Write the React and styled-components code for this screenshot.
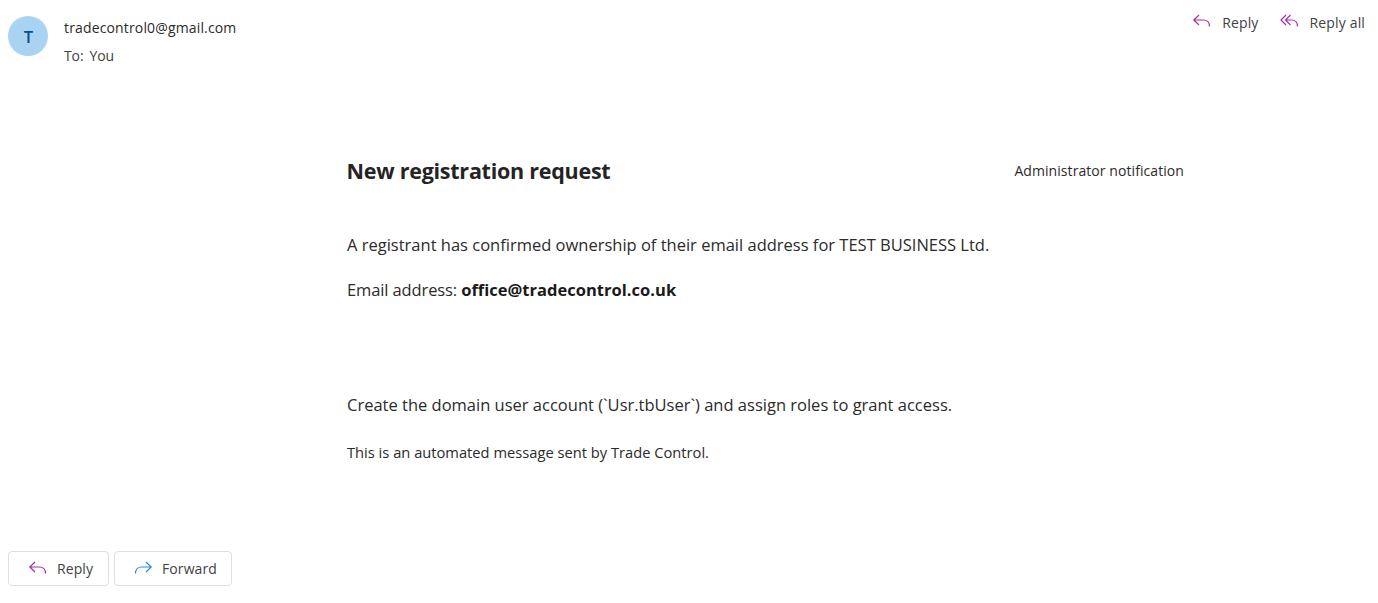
import React from 'react';
import styled, { createGlobalStyle } from 'styled-components';

const GlobalStyle = createGlobalStyle`
  html, body {
    margin: 0;
    background: #fff;
    font-family: "Open Sans", "Noto Sans", sans-serif;
    color: #2b2b2b;
  }
`;

const Page = styled.div`
  width: 1378px;
  height: 603px;
  display: flex;
  flex-direction: column;
  overflow: hidden;
`;

const Header = styled.div`
  display: flex;
  justify-content: space-between;
  align-items: flex-start;
  padding: 16px 13px 0 8px;
`;

const Sender = styled.div`
  display: flex;
  gap: 16px;
`;

const Avatar = styled.div`
  width: 40px;
  height: 40px;
  padding-left: 1px;
  box-sizing: border-box;
  border-radius: 50%;
  background: #a9d3f2;
  color: #0f4c81;
  display: flex;
  align-items: center;
  justify-content: center;
  font-size: 16.5px;
  font-weight: 600;
`;

const SenderText = styled.div`
  display: flex;
  flex-direction: column;
  gap: 8px;
  padding-top: 2px;
  font-size: 14px;
  line-height: 20px;
  letter-spacing: 0.15px;
`;

const Recipient = styled.div`
  color: #424242;
  letter-spacing: -0.1px;
  span { margin-right: 6px; }
`;

const HeaderActions = styled.div`
  display: flex;
  gap: 21px;
  margin-top: -4px;
`;

const HeaderAction = styled.div`
  display: flex;
  align-items: center;
  gap: 10px;
  font-size: 14px;
  line-height: 20px;
  letter-spacing: 0.15px;
  color: #424242;
  svg {
    display: block;
    margin-bottom: 2px;
  }
`;

const Body = styled.div`
  width: 837px;
  margin: 90px 0 0 347px;
  flex: 1;
`;

const TitleRow = styled.div`
  display: flex;
  justify-content: space-between;
  align-items: center;
  margin-bottom: 48px;
`;

const Title = styled.h1`
  margin: 0 0 0 -0.5px;
  font-size: 21.5px;
  line-height: 30px;
  font-weight: 700;
  letter-spacing: -0.25px;
  color: #242424;
`;

const Tag = styled.div`
  font-size: 14px;
  line-height: 20px;
  letter-spacing: 0.07px;
`;

const Para = styled.p`
  margin: 0 0 ${p => p.$gap}px;
  font-size: 16.5px;
  line-height: 22px;
  letter-spacing: ${p => p.$spacing || 0}px;
  strong {
    font-weight: 700;
    color: #1a1a1a;
    letter-spacing: 0.02px;
  }
`;

const Note = styled.p`
  margin: 0;
  font-size: 14.7px;
  line-height: 20px;
`;

const Footer = styled.div`
  display: flex;
  gap: 5px;
  padding: 0 0 17px 8px;
`;

const FooterButton = styled.div`
  box-sizing: border-box;
  height: 35px;
  width: ${p => p.$width}px;
  display: flex;
  align-items: center;
  gap: 9px;
  padding-left: ${p => p.$pad}px;
  border: 1px solid #e0e0e0;
  border-radius: 4px;
  font-size: 14px;
  letter-spacing: 0.1px;
  color: #424242;
`;

const ReplyIcon = () => (
  <svg width="20" height="20" viewBox="0 0 20 20" fill="none" stroke="#a32fb0" strokeWidth="1.2">
    <path d="M7 3 1.800 8 7 13M1.800 8H11.500C15 8 17.500 10.500 17.500 14.500" />
  </svg>
);

const ReplyAllIcon = () => (
  <svg width="20" height="20" viewBox="0 0 20 20" fill="none" stroke="#a32fb0" strokeWidth="1.2">
    <path d="M6 3 1 8 6 13M10.500 3 5.500 8 10.500 13M5.500 8H11.500C15 8 17.500 10.500 17.500 14.500" />
  </svg>
);

const ForwardIcon = () => (
  <svg width="20" height="20" viewBox="0 0 20 20" fill="none" stroke="#2490dc" strokeWidth="1.2">
    <path d="M13 3 18.200 8 13 13M18.200 8H8.500C5 8 2.500 10.500 2.500 14.500" />
  </svg>
);

export default function App() {
  return (
    <Page>
      <GlobalStyle />
      <Header>
        <Sender>
          <Avatar>T</Avatar>
          <SenderText>
            <div>tradecontrol0@gmail.com</div>
            <Recipient><span>To:</span>You</Recipient>
          </SenderText>
        </Sender>
        <HeaderActions>
          <HeaderAction><ReplyIcon />Reply</HeaderAction>
          <HeaderAction><ReplyAllIcon />Reply all</HeaderAction>
        </HeaderActions>
      </Header>
      <Body>
        <TitleRow>
          <Title>New registration request</Title>
          <Tag>Administrator notification</Tag>
        </TitleRow>
        <Para $gap={23}>A registrant has confirmed ownership of their email address for TEST BUSINESS Ltd.</Para>
        <Para $gap={93} $spacing={-0.12}>Email address: <strong>office@tradecontrol.co.uk</strong></Para>
        <Para $gap={26}>Create the domain user account (`Usr.tbUser`) and assign roles to grant access.</Para>
        <Note>This is an automated message sent by Trade Control.</Note>
      </Body>
      <Footer>
        <FooterButton $width={101} $pad={19}><ReplyIcon />Reply</FooterButton>
        <FooterButton $width={118} $pad={18}><ForwardIcon />Forward</FooterButton>
      </Footer>
    </Page>
  );
}
